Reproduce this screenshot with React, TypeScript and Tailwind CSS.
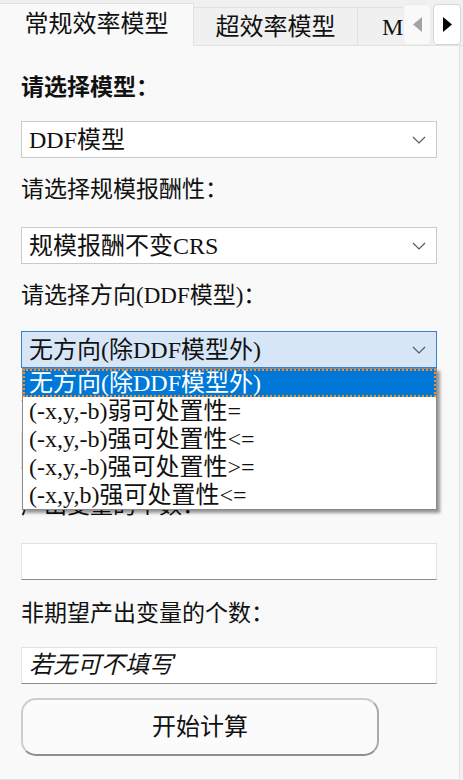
import React from 'react';

const FONT = "font-['Liberation_Serif','Noto_Sans_CJK_SC',serif]";

function Chevron() {
  return (
    <svg width="14" height="8" viewBox="0 0 14 8" className="shrink-0">
      <polyline points="1,1 7,7 13,1" fill="none" stroke="#555" strokeWidth="1.1" />
    </svg>
  );
}

function Select({ value, focused = false }: { value: string; focused?: boolean }) {
  return (
    <div
      className={`flex h-[37px] w-[416px] items-center justify-between border pl-[7px] pr-[10px] text-[24px] leading-none text-[#111] ${
        focused ? 'border-[#3a7fd0] bg-[#d6e6f7]' : 'border-[#cacaca] bg-white'
      }`}
    >
      <span>{value}</span>
      <Chevron />
    </div>
  );
}

function Label({ children, className = '' }: { children: React.ReactNode; className?: string }) {
  return <div className={`h-[30px] text-[23px] leading-[30px] text-[#111] ${className}`}>{children}</div>;
}

function TextBox({ placeholder = '', className = '' }: { placeholder?: string; className?: string }) {
  return (
    <input
      placeholder={placeholder}
      className={`h-[37px] w-[416px] border border-[#e2e2e2] border-b-[#8d8d8d] bg-white pl-[7px] text-[24px] outline-none placeholder:italic placeholder:text-[#111] ${className}`}
    />
  );
}

const options = [
  '无方向(除DDF模型外)',
  '(-x,y,-b)弱可处置性=',
  '(-x,y,-b)强可处置性<=',
  '(-x,y,-b)强可处置性>=',
  '(-x,y,b)强可处置性<=',
];

export default function App() {
  return (
    <div className={`h-[780px] w-[463px] overflow-hidden bg-[#f0f0f0] ${FONT}`}>
      {/* tab strip */}
      <div className="flex h-[46px] items-end">
        <div className="flex h-full w-[403px] items-end overflow-hidden">
          <div className="flex h-[43px] w-[194px] shrink-0 items-center justify-center border-r border-t border-[#e1e1e1] bg-[#f9f9f9] pb-[2px] text-[24px] text-[#111]">
            常规效率模型
          </div>
          <div className="flex h-[39px] w-[164px] shrink-0 items-center justify-center border-b border-r border-t border-[#e1e1e1] bg-[#f0f0f0] text-[24px] text-[#111]">
            超效率模型
          </div>
          <div className="flex h-[39px] shrink-0 items-center whitespace-nowrap border-b border-t border-[#e1e1e1] bg-[#f0f0f0] pl-[24px] text-[24px] text-[#111]">
            Malmquist指数模型
          </div>
        </div>
        <div className="flex h-full items-end border-b border-[#e1e1e1] pt-[4px]">
          <div className="flex h-[41px] w-[28px] items-center justify-center rounded-[4px] border border-[#ececec] bg-[#f9f9f9]">
            <svg width="9" height="15" viewBox="0 0 9 15">
              <polygon points="9,0 0,7.5 9,15" fill="#a3a3a3" />
            </svg>
          </div>
          <div className="ml-[2px] flex h-[41px] w-[28px] items-center justify-center rounded-[4px] border border-[#d6d6d6] bg-white">
            <svg width="9" height="15" viewBox="0 0 9 15">
              <polygon points="0,0 9,7.5 0,15" fill="#000" />
            </svg>
          </div>
          <div className="w-[2px]" />
        </div>
      </div>

      {/* page */}
      <div className="h-[734px] w-[460px] border-b border-r border-[#e3e3e3] bg-[#f9f9f9] px-[21px] pt-[27px]">
        <Label className="font-bold">请选择模型：</Label>
        <div className="mt-[18px]">
          <Select value="DDF模型" />
        </div>

        <Label className="mt-[17px]">请选择规模报酬性：</Label>
        <div className="mt-[22px]">
          <Select value="规模报酬不变CRS" />
        </div>

        <Label className="mt-[17px]">请选择方向(DDF模型)：</Label>
        <div className="relative z-10 mt-[20px]">
          <Select value="无方向(除DDF模型外)" focused />
          <div className="absolute left-[1px] top-full w-[415px] border border-[#8a8a8a] bg-white shadow-[3px_3px_3px_rgba(0,0,0,0.4)]">
            {options.map((o, i) =>
              i === 0 ? (
                <div
                  key={o}
                  className="flex h-[28px] items-center border-2 border-dotted border-[#f5902c] bg-[#0078d7] pl-[4px] text-[24px] leading-none text-white"
                >
                  {o}
                </div>
              ) : (
                <div key={o} className="flex h-[28px] items-center pl-[6px] text-[24px] leading-none text-[#111]">
                  {o}
                </div>
              )
            )}
          </div>
        </div>

        <Label className="mt-[17px]">投入变量的个数：</Label>
        <TextBox className="mt-[17px] block" />

        <Label className="mt-[22px]">产出变量的个数：</Label>
        <TextBox className="mt-[22px] block h-[36px]" />

        <Label className="mt-[19px]">非期望产出变量的个数：</Label>
        <TextBox className="mt-[18px] block" placeholder="若无可不填写" />

        <button className="mt-[14px] flex h-[58px] w-[358px] items-center justify-center rounded-[15px] border-2 border-[#cdcdcd] border-b-[#8e8e8e] border-r-[#a9a9a9] bg-[#fbfbfb] text-[24px] text-[#111]">
          开始计算
        </button>
      </div>
    </div>
  );
}
